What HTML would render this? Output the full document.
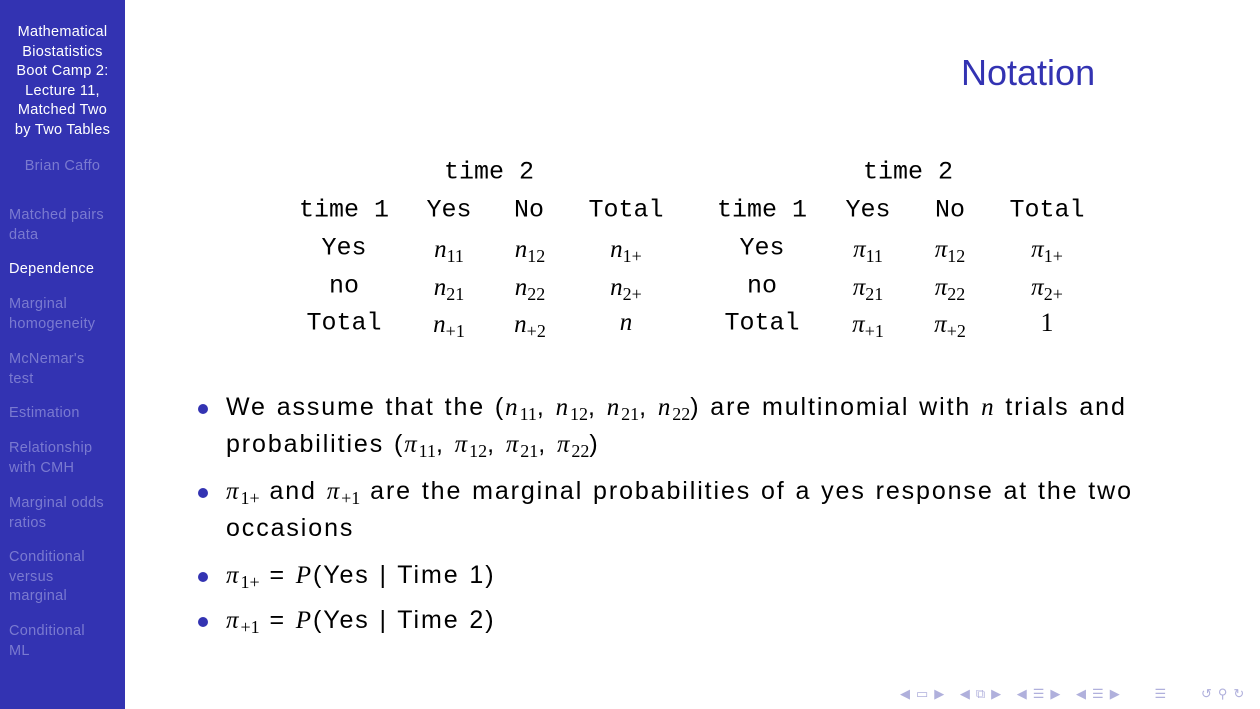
<!DOCTYPE html>
<html><head><meta charset="utf-8"><style>
body{margin:0;width:1260px;height:709px;position:relative;background:#fff;overflow:hidden;font-family:"Liberation Sans",sans-serif}
#side{position:absolute;left:0;top:0;width:125px;height:709px;background:#3333b2}
.s{position:absolute;left:9px;font-size:14.5px;line-height:19.5px;color:#7a7ad0;letter-spacing:0.3px}
.t{position:absolute;transform:translate(-50%,-50%);white-space:nowrap;font-family:"Liberation Mono",monospace;font-size:25px;color:#000}
.m{font-family:"Liberation Serif",serif;font-style:italic;font-size:25px}
.p{font-family:"Liberation Serif",serif;font-style:italic}
sub{font-size:18px;font-style:normal;font-family:"Liberation Serif",serif;vertical-align:-5px;line-height:0;letter-spacing:0}
.b{position:absolute;left:226px;font-size:25px;color:#000;white-space:nowrap;letter-spacing:1.9px;word-spacing:1px}
.d{position:absolute;left:198px;width:10px;height:10px;border-radius:50%;background:#3333b2}
.nav{position:absolute;top:686px;color:#b0b0dc;font-size:13px;letter-spacing:6px}
</style></head><body>
<div id="side">
<div class="s" style="top:23px;left:0;width:125px;text-align:center;color:#fff">Mathematical<br>Biostatistics<br>Boot Camp 2:<br>Lecture 11,<br>Matched Two<br>by Two Tables</div>
<div class="s" style="top:157px;left:0;width:125px;text-align:center">Brian Caffo</div>
<div class="s" style="top:206px">Matched pairs<br>data</div>
<div class="s" style="top:260px;color:#fff">Dependence</div>
<div class="s" style="top:295px">Marginal<br>homogeneity</div>
<div class="s" style="top:350px">McNemar's<br>test</div>
<div class="s" style="top:404px">Estimation</div>
<div class="s" style="top:439px">Relationship<br>with CMH</div>
<div class="s" style="top:494px">Marginal odds<br>ratios</div>
<div class="s" style="top:548px">Conditional<br>versus<br>marginal</div>
<div class="s" style="top:622px">Conditional<br>ML</div>
</div>
<div style="position:absolute;left:961px;top:52px;font-size:36px;color:#3333b2">Notation</div>

<div class="t" style="left:489px;top:172px">time 2</div>
<div class="t" style="left:908px;top:172px">time 2</div>

<div class="t" style="left:344px;top:210px">time 1</div><div class="t" style="left:449px;top:210px">Yes</div><div class="t" style="left:529px;top:210px">No</div><div class="t" style="left:626px;top:210px">Total</div>
<div class="t" style="left:762px;top:210px">time 1</div><div class="t" style="left:868px;top:210px">Yes</div><div class="t" style="left:950px;top:210px">No</div><div class="t" style="left:1047px;top:210px">Total</div>

<div class="t" style="left:344px;top:248px">Yes</div><div class="t m" style="left:449px;top:250px">n<sub>11</sub></div><div class="t m" style="left:530px;top:250px">n<sub>12</sub></div><div class="t m" style="left:626px;top:250px">n<sub>1+</sub></div>
<div class="t" style="left:762px;top:248px">Yes</div><div class="t m" style="left:868px;top:250px">π<sub>11</sub></div><div class="t m" style="left:950px;top:250px">π<sub>12</sub></div><div class="t m" style="left:1047px;top:250px">π<sub>1+</sub></div>

<div class="t" style="left:344px;top:286px">no</div><div class="t m" style="left:449px;top:288px">n<sub>21</sub></div><div class="t m" style="left:530px;top:288px">n<sub>22</sub></div><div class="t m" style="left:626px;top:288px">n<sub>2+</sub></div>
<div class="t" style="left:762px;top:286px">no</div><div class="t m" style="left:868px;top:288px">π<sub>21</sub></div><div class="t m" style="left:950px;top:288px">π<sub>22</sub></div><div class="t m" style="left:1047px;top:288px">π<sub>2+</sub></div>

<div class="t" style="left:344px;top:323px">Total</div><div class="t m" style="left:449px;top:325px">n<sub>+1</sub></div><div class="t m" style="left:530px;top:325px">n<sub>+2</sub></div><div class="t m" style="left:626px;top:323px">n</div>
<div class="t" style="left:762px;top:323px">Total</div><div class="t m" style="left:868px;top:325px">π<sub>+1</sub></div><div class="t m" style="left:950px;top:325px">π<sub>+2</sub></div><div class="t" style="left:1047px;top:323px;font-family:'Liberation Serif',serif;font-size:26px">1</div>

<div class="d" style="top:404px"></div>
<div class="b" style="top:393px">We assume that the (<span class="p">n</span><sub>11</sub>, <span class="p">n</span><sub>12</sub>, <span class="p">n</span><sub>21</sub>, <span class="p">n</span><sub>22</sub>) are multinomial with <span class="p">n</span> trials and</div>
<div class="b" style="top:430px">probabilities (<span class="p">π</span><sub>11</sub>, <span class="p">π</span><sub>12</sub>, <span class="p">π</span><sub>21</sub>, <span class="p">π</span><sub>22</sub>)</div>
<div class="d" style="top:488px"></div>
<div class="b" style="top:477px"><span class="p">π</span><sub>1+</sub> and <span class="p">π</span><sub>+1</sub> are the marginal probabilities of a yes response at the two</div>
<div class="b" style="top:514px">occasions</div>
<div class="d" style="top:572px"></div>
<div class="b" style="top:561px"><span class="p">π</span><sub>1+</sub> = <span class="p">P</span>(Yes | Time 1)</div>
<div class="d" style="top:617px"></div>
<div class="b" style="top:606px"><span class="p">π</span><sub>+1</sub> = <span class="p">P</span>(Yes | Time 2)</div>

<div class="nav" style="left:900px">◀▭▶ ◀⧉▶ ◀☰▶ ◀☰▶&nbsp;&nbsp; ☰ &nbsp; ↺⚲↻</div>
</body></html>
